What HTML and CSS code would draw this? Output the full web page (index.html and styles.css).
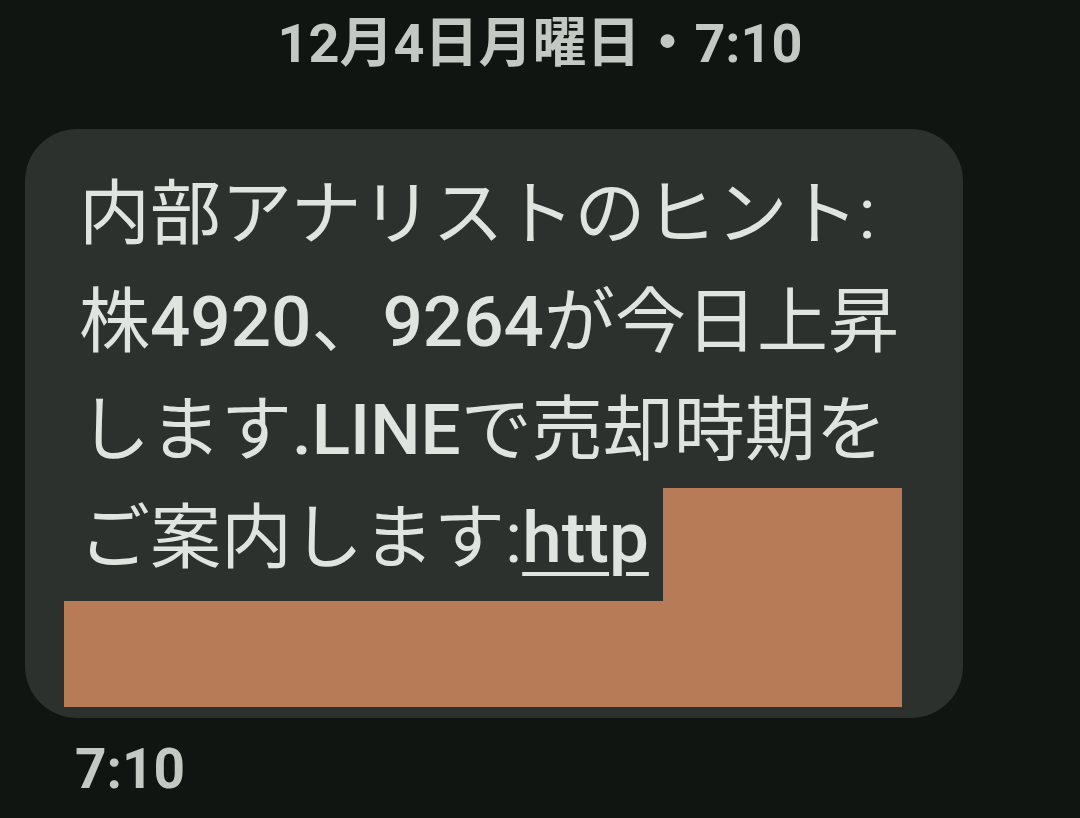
FILE: index.html
```html
<!DOCTYPE html>
<html lang="ja">
<head>
    <meta charset="UTF-8">
    <meta name="viewport" content="width=device-width, initial-scale=1.0">
    <title>メッセージ</title>
    <link rel="stylesheet" href="styles.css">
</head>
<body>
    <div class="thread">
        <div class="date-header">12月4日月曜日・7:10</div>
        <div class="bubble">
            <p class="message">内部アナリストのヒント:株<span class="latin">4920</span>、<span class="latin">9264</span>が今日上昇します<span class="latin">.LINE</span>で売却時期をご案内します:<a class="link latin" href="#">http</a></p>
            <div class="redact redact-top"></div>
            <div class="redact redact-bottom"></div>
        </div>
        <div class="time">7:10</div>
    </div>
</body>
</html>
```

FILE: styles.css
```css
body {
    margin: 0;
    background-color: #111511;
    font-family: Roboto, "Noto Sans CJK JP", sans-serif;
    width: 1080px;
    height: 818px;
    overflow: hidden;
}
.thread {
    display: flex;
    flex-direction: column;
}
.date-header {
    height: 88px;
    line-height: 88px;
    margin-bottom: 41px;
    text-align: center;
    font-size: 54px;
    font-weight: 700;
    color: #c3c8c2;
}
.bubble {
    position: relative;
    margin-left: 25px;
    width: 938px;
    height: 589px;
    box-sizing: border-box;
    padding: 31px 30px 0 54px;
    background-color: #2d312e;
    border-radius: 52px;
}
.message {
    margin: 0;
    font-size: 71px;
    line-height: 108px;
    color: #dfe4df;
}
.latin {
    font-weight: 500;
}
.link {
    color: #dfe4df;
    text-decoration: underline;
    text-decoration-thickness: 4px;
    text-underline-offset: 10px;
}
.redact {
    position: absolute;
    background-color: #b87b58;
}
.redact-top {
    left: 638px;
    top: 359px;
    width: 239px;
    height: 114px;
}
.redact-bottom {
    left: 39px;
    top: 472px;
    width: 838px;
    height: 106px;
}
.time {
    margin: 11px 0 0 75px;
    line-height: 80px;
    font-size: 55px;
    font-weight: 700;
    color: #c3c8c2;
}
```
